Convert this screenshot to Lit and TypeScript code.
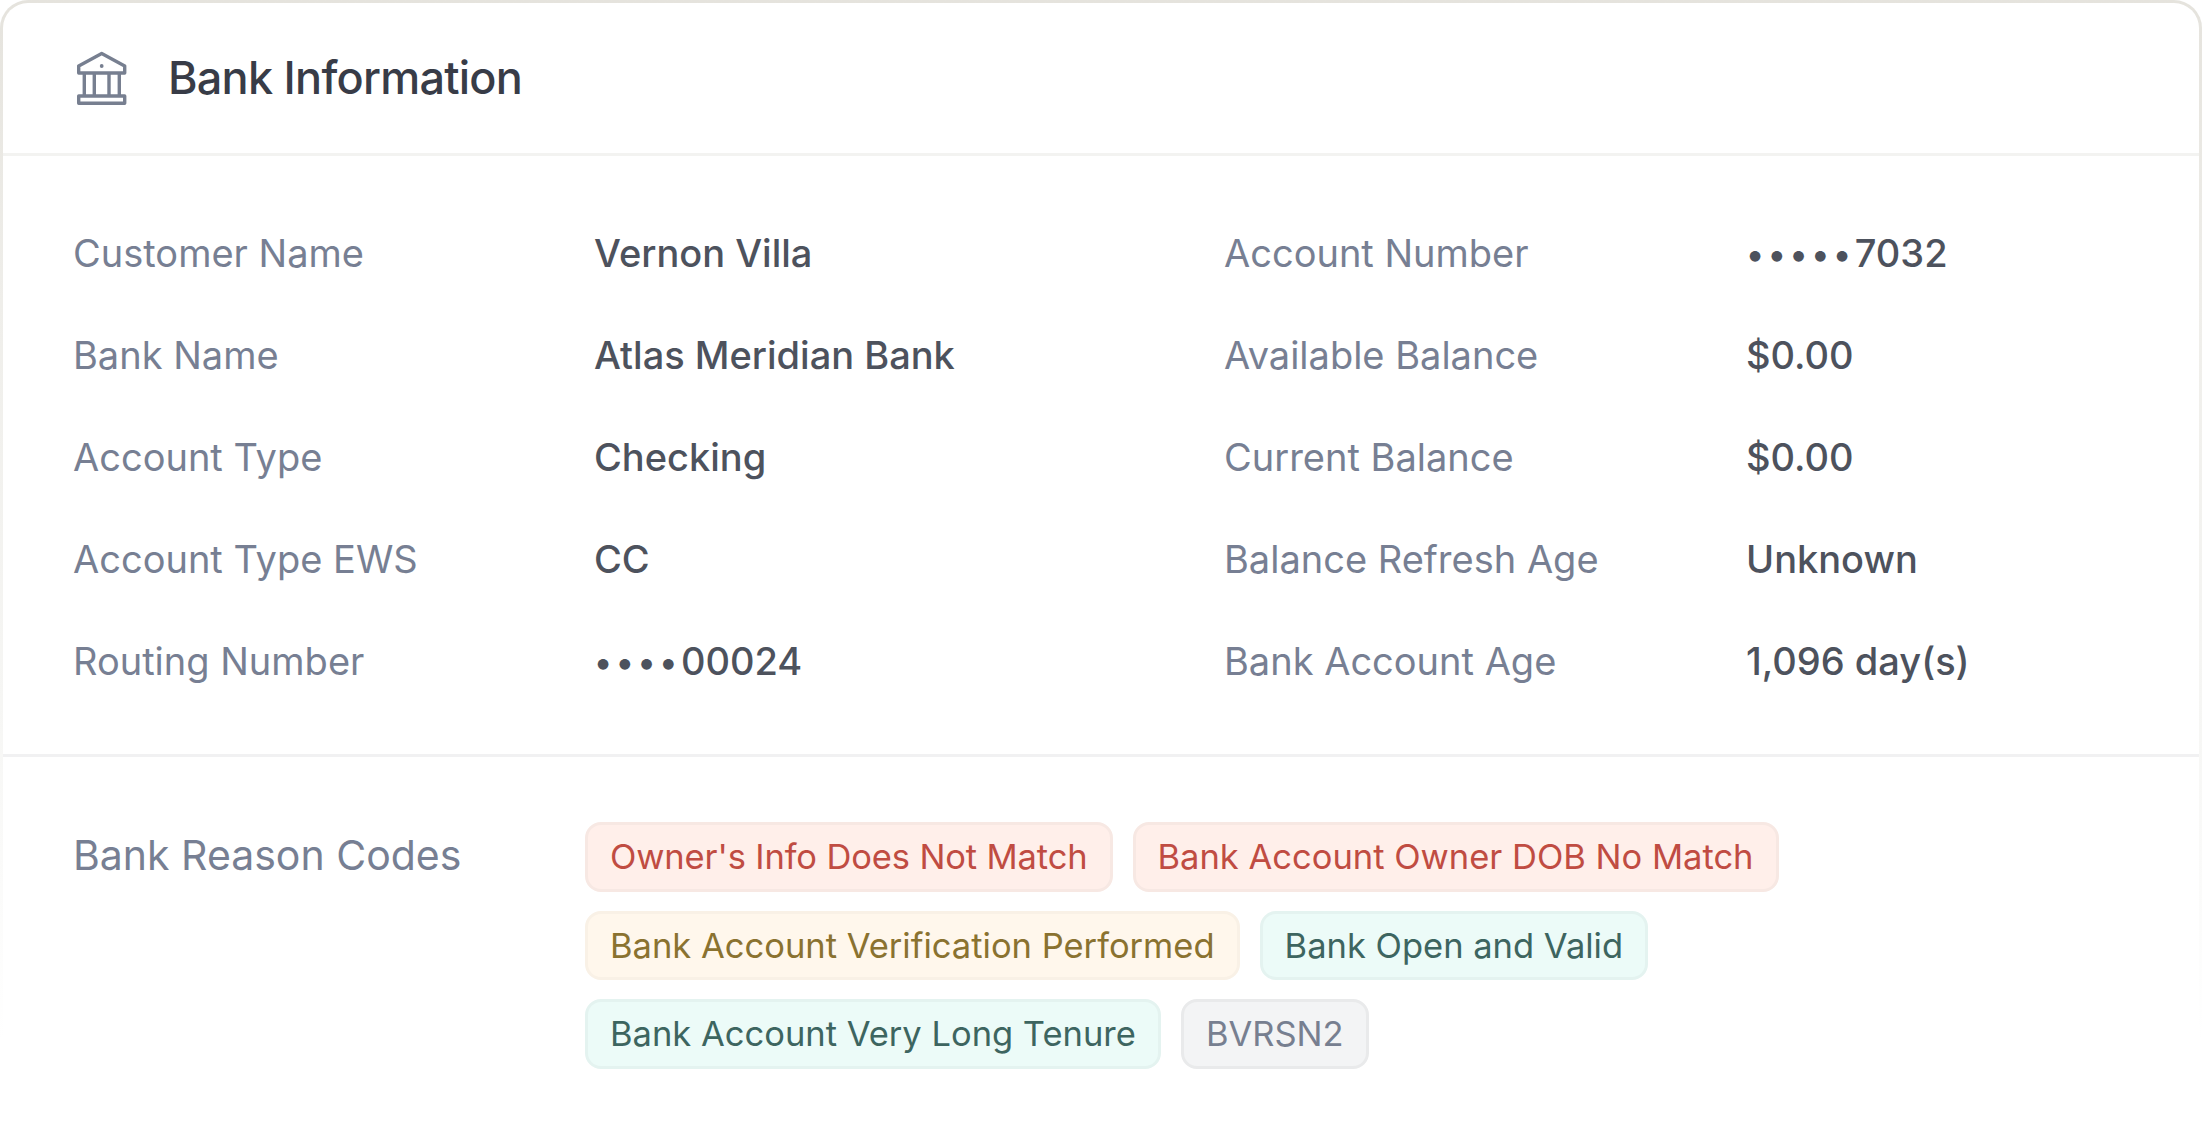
import { LitElement, css, html } from "lit";
import { customElement } from "lit/decorators.js";

type Tone = "red" | "amber" | "green" | "gray";

const LEFT_ROWS = [
  ["Customer Name", "Vernon Villa"],
  ["Bank Name", "Atlas Meridian Bank"],
  ["Account Type", "Checking"],
  ["Account Type EWS", "CC"],
  ["Routing Number", "••••00024"],
];

const RIGHT_ROWS = [
  ["Account Number", "•••••7032"],
  ["Available Balance", "$0.00"],
  ["Current Balance", "$0.00"],
  ["Balance Refresh Age", "Unknown"],
  ["Bank Account Age", "1,096 day(s)"],
];

const CODES: [string, Tone][] = [
  ["Owner's Info Does Not Match", "red"],
  ["Bank Account Owner DOB No Match", "red"],
  ["Bank Account Verification Performed", "amber"],
  ["Bank Open and Valid", "green"],
  ["Bank Account Very Long Tenure", "green"],
  ["BVRSN2", "gray"],
];

@customElement("app-root")
export class AppRoot extends LitElement {
  static styles = css`
    :host {
      display: block;
      width: 2202px;
      height: 1136px;
      background: #fff;
      font-family: Inter, "Liberation Sans", sans-serif;
      overflow: hidden;
    }

    /* the outline fades out towards the bottom, so it is a gradient behind the panel */
    .card {
      box-sizing: border-box;
      height: 1136px;
      padding: 3px 3px 0;
      border-radius: 28px 28px 0 0;
      background: linear-gradient(#e5e3dd 0, #efeeea 300px, #f6f6f4 700px, #fff 1040px);
    }

    .panel {
      height: 100%;
      background: #fff;
      border-radius: 25px 25px 0 0;
    }

    .header {
      display: flex;
      align-items: center;
      gap: 38px;
      height: 153px;
      box-sizing: border-box;
      padding-left: 71px;
      border-bottom: 3px solid #f3f3f1;
    }

    .header svg {
      width: 56px;
      height: 56px;
      color: #777f90;
      flex: none;
    }

    h2 {
      margin: 0 0 2px;
      font-size: 45px;
      font-weight: 500;
      color: #383c47;
      letter-spacing: -0.75px;
    }

    .details {
      display: grid;
      grid-template-columns: 1151px 1fr;
      padding: 46px 70px 0;
      height: 601px;
      box-sizing: border-box;
      border-bottom: 3px solid #f1f1f2;
    }

    .row {
      display: grid;
      grid-template-columns: 521px 1fr;
      align-items: center;
      height: 102px;
      font-size: 38px;
    }

    .right .row {
      grid-template-columns: 522px 1fr;
    }

    .label {
      color: #777f93;
    }

    .value {
      color: #4d525d;
      font-weight: 500;
    }

    .dots {
      font-size: 34px;
      letter-spacing: 3.6px;
      vertical-align: 1px;
    }

    .codes {
      display: grid;
      grid-template-columns: 512px 1fr;
      padding: 65px 70px 0;
    }

    .codes .label {
      font-size: 41px;
      line-height: 66px;
    }

    .chips {
      display: flex;
      flex-wrap: wrap;
      gap: 19px 20px;
      width: 1300px;
    }

    .chip {
      box-sizing: border-box;
      height: 69.5px;
      line-height: 63.5px;
      padding: 0 22px;
      border: 3px solid;
      border-radius: 16px;
      font-size: 34.5px;
    }

    .chip:first-child {
      letter-spacing: -0.13px;
    }

    .red {
      background: #ffefea;
      border-color: #f7e8e3;
      color: #c04c42;
    }

    .amber {
      background: #fff7ec;
      border-color: #f9f1e6;
      color: #8a7230;
    }

    .green {
      background: #ecfbf8;
      border-color: #e4f3f0;
      color: #3d6560;
    }

    .gray {
      background: #f3f4f5;
      border-color: #e9eaeb;
      color: #777f90;
    }
  `;

  // masked numbers: the bullets are smaller and wider apart than the digits
  private renderValue(value: string) {
    const digits = value.replace(/•/g, "");
    const dots = value.slice(0, value.length - digits.length);
    return dots ? html`<span class="dots">${dots}</span>${digits}` : value;
  }

  private renderRows(rows: string[][]) {
    return rows.map(
      ([label, value]) => html`
        <div class="row">
          <span class="label">${label}</span>
          <span class="value">${this.renderValue(value)}</span>
        </div>
      `
    );
  }

  render() {
    return html`
      <section class="card">
        <div class="panel">
          <header class="header">
            <svg viewBox="0 0 56 56" fill="none" stroke="currentColor" stroke-width="3.4" stroke-linejoin="round">
              <path d="M27.7 3.5 50.7 16v7H4.7v-7z" />
              <path d="M10.3 23v23M20.3 23v23M35 23v23M45.3 23v23" />
              <path d="M4.7 46h46v7.3h-46z" />
              <circle cx="27.7" cy="16" r="1.9" fill="currentColor" stroke="none" />
            </svg>
            <h2>Bank Information</h2>
          </header>
          <div class="details">
            <div>${this.renderRows(LEFT_ROWS)}</div>
            <div class="right">${this.renderRows(RIGHT_ROWS)}</div>
          </div>
          <div class="codes">
            <span class="label">Bank Reason Codes</span>
            <div class="chips">
              ${CODES.map(([text, tone]) => html`<span class="chip ${tone}">${text}</span>`)}
            </div>
          </div>
        </div>
      </section>
    `;
  }
}
